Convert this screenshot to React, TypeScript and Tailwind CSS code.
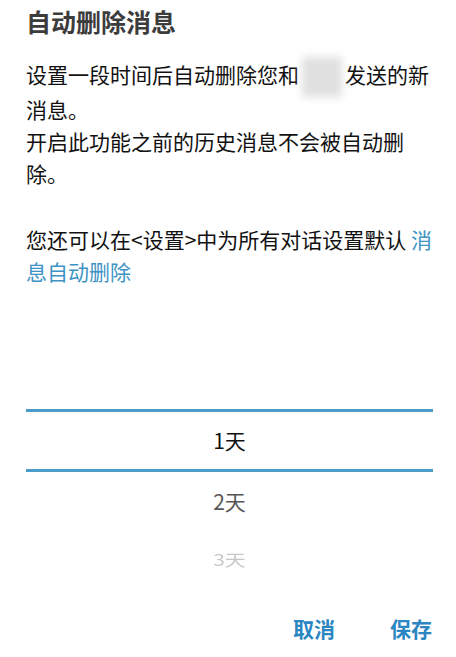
export default function App() {
  const font = { fontFamily: '"Noto Sans CJK SC", "Noto Sans", sans-serif' };
  return (
    <div className="w-[456px] h-[657px] bg-white overflow-hidden" style={font}>
      <div className="flex flex-col pl-[26px] pr-[20px]">
        <h1 className="text-[25px] leading-[43px] font-bold text-[#3c3c3c]">
          自动删除消息
        </h1>

        <p className="mt-[15px] text-[21px] leading-[32px] text-[#111]">
          设置一段时间后自动删除您和
          <span className="inline-block align-middle w-[40px] h-[40px] -my-[4px] ml-[3px] mr-[3px] bg-[#e0e0e0] blur-[4px]" />
          发送的新消息。
          <br />
          开启此功能之前的历史消息不会被自动删除。
        </p>

        <p className="mt-[34px] text-[21px] leading-[32px] text-[#111]">
          您还可以在&lt;设置&gt;中为所有对话设置默认{' '}
          <span className="text-[#3d93c4]">消息自动删除</span>
        </p>

        <div className="mt-[122px] mr-[3px] flex flex-col text-[21px] text-center">
          <div className="h-[63px] flex items-center justify-center border-y-[3px] border-[#4a9cc9] text-[#111]">
            1天
          </div>
          <div className="h-[58px] flex items-center justify-center text-[#555]">
            2天
          </div>
          <div className="h-[58px] flex items-center justify-center text-[#c8c8c8]">
            <span className="inline-block scale-y-75">3天</span>
          </div>
        </div>

        <div className="mt-[24px] mr-[4px] flex justify-end gap-[55px] text-[21px] leading-[32px] font-bold text-[#2b86c2]">
          <button>取消</button>
          <button>保存</button>
        </div>
      </div>
    </div>
  );
}
